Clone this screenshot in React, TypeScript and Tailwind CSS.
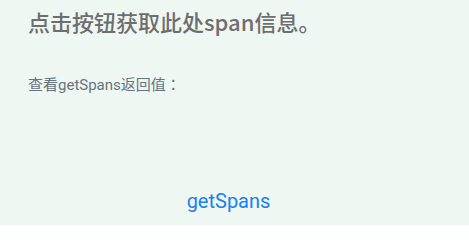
export default function App() {
  return (
    <div className="w-[469px] h-[225px] bg-[#eef7f2] flex flex-col font-['Roboto','Noto_Sans_CJK_SC',sans-serif]">
      <div className="pl-[28px] pt-[5px] text-[22px] leading-[32px] font-medium text-[#6e6e6e] font-['Noto_Sans_CJK_SC',sans-serif]">
        点击按钮获取此处span信息。
      </div>
      <div className="pl-[28px] mt-[37px] text-[15px] leading-[20px] text-[#67737f]">
        查看getSpans返回值<span className="font-['Noto_Sans_CJK_JP',sans-serif]">：</span>
      </div>
      <div className="flex justify-center pr-[12px] mt-[94px]">
        <span className="text-[20px] leading-[24px] font-normal text-[#1a7ff0]">getSpans</span>
      </div>
    </div>
  );
}
